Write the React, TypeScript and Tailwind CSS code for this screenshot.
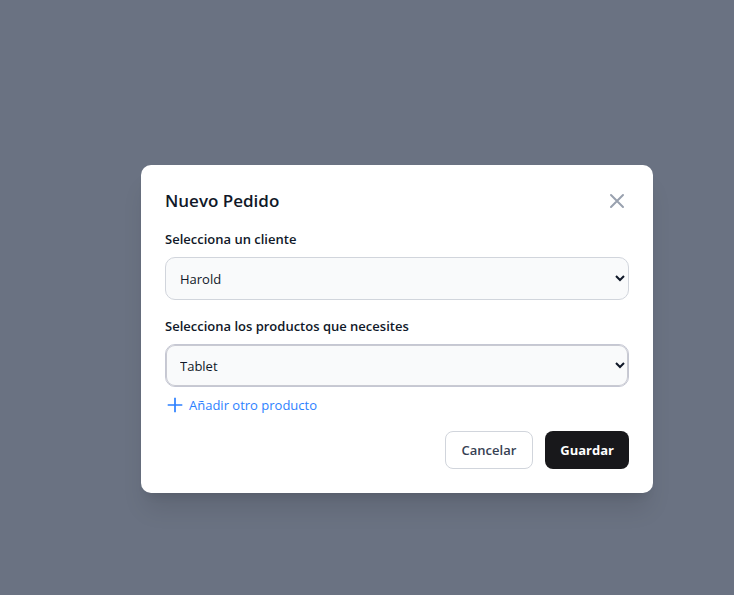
import { useState } from "react";

const fieldClass =
  "block h-[43px] w-full rounded-[10px] border bg-gray-50 px-2.5 pt-[11px] pb-2.5 text-[13px] leading-5 text-gray-900 outline-none";
const labelClass = "mb-2 block text-[13px] leading-5 font-semibold text-gray-900";

export default function App() {
  const [client, setClient] = useState("Harold");
  const [product, setProduct] = useState("Tablet");

  return (
    <div className="flex min-h-screen items-center justify-center bg-gray-500 pt-[62px] pl-[60px] font-['Open_Sans','Noto_Sans',sans-serif]">
      <div
        role="dialog"
        aria-labelledby="dialog-title"
        className="w-full max-w-lg rounded-[10px] bg-white p-6 shadow-xl"
      >
        <div className="mb-4 flex items-center justify-between">
          <h2 id="dialog-title" className="text-[17px] leading-6 font-semibold text-gray-900">
            Nuevo Pedido
          </h2>
          <button type="button" aria-label="Cerrar" className="text-gray-400">
            <svg className="size-6" fill="none" viewBox="0 0 24 24" stroke="currentColor" strokeWidth="2">
              <path strokeLinecap="round" strokeLinejoin="round" d="M6 18L18 6M6 6l12 12" />
            </svg>
          </button>
        </div>
        <form>
          <div className="mb-4">
            <label htmlFor="client" className={labelClass}>
              Selecciona un cliente
            </label>
            <select
              id="client"
              value={client}
              onChange={(e) => setClient(e.target.value)}
              className={`${fieldClass} border-gray-300`}
            >
              <option>Harold</option>
            </select>
          </div>
          <div className="mb-4">
            <label htmlFor="product" className={labelClass}>
              Selecciona los productos que necesites
            </label>
            <select
              id="product"
              value={product}
              onChange={(e) => setProduct(e.target.value)}
              className={`${fieldClass} border-[#c5c7d3] inset-ring inset-ring-[#c9cad2]`}
            >
              <option>Tablet</option>
            </select>
            <button type="button" className="mt-2 flex items-center gap-1 text-[13px] leading-5 text-blue-500">
              <svg className="size-5" fill="none" viewBox="0 0 20 20" stroke="currentColor" strokeWidth="1.7">
                <path d="M10 2.7v14.6M2.7 10h14.6" />
              </svg>
              Añadir otro producto
            </button>
          </div>
          <div className="flex justify-end gap-3">
            <button
              type="button"
              className="rounded-lg border border-gray-300 bg-white px-4 py-2 text-[13px] leading-5 font-semibold text-gray-700"
            >
              Cancelar
            </button>
            <button
              type="submit"
              className="rounded-lg bg-zinc-900 px-[15px] py-[9px] text-[13px] leading-5 font-bold text-white"
            >
              Guardar
            </button>
          </div>
        </form>
      </div>
    </div>
  );
}
